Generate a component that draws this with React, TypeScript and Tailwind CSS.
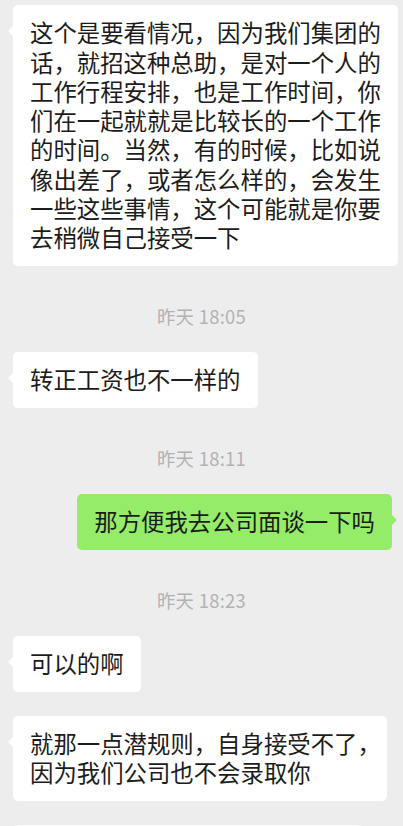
import React from "react";

const FONT = '"Noto Sans CJK SC", "Noto Sans", sans-serif';

function LeftTail() {
  return (
    <svg
      className="absolute left-[-5px] top-[20px]"
      width="6"
      height="12"
      viewBox="0 0 6 12"
    >
      <path d="M6 0 L0.8 5.2 Q0 6 0.8 6.8 L6 12 Z" fill="#ffffff" />
    </svg>
  );
}

function RightTail() {
  return (
    <svg
      className="absolute right-[-5px] top-[20px]"
      width="6"
      height="12"
      viewBox="0 0 6 12"
    >
      <path d="M0 0 L5.2 5.2 Q6 6 5.2 6.8 L0 12 Z" fill="#95ec69" />
    </svg>
  );
}

function Left({ children }: { children: React.ReactNode }) {
  return (
    <div className="flex justify-start pl-[13px]">
      <div className="relative w-fit rounded-[5px] bg-white px-[17px] py-[13.3px] text-[23.4px] leading-[29.3px] text-[#1c1c1c]">
        <LeftTail />
        <p className="whitespace-nowrap">{children}</p>
      </div>
    </div>
  );
}

function Right({ children }: { children: React.ReactNode }) {
  return (
    <div className="flex justify-end pr-[11px]">
      <div className="relative w-fit rounded-[5px] bg-[#95ec69] px-[17px] py-[13.3px] text-[23.4px] leading-[29.3px] text-[#1c1c1c]">
        <RightTail />
        <p className="whitespace-nowrap">{children}</p>
      </div>
    </div>
  );
}

function Time({ text }: { text: string }) {
  return (
    <div className="mt-[14px] flex h-[24px] items-center justify-center text-[18.4px] leading-[24px] tracking-[0.3px] text-[#b2b2b2]">
      {text}
    </div>
  );
}

export default function App() {
  return (
    <div
      className="h-[826px] w-full overflow-hidden bg-[#ededed] pt-[5px]"
      style={{ fontFamily: FONT }}
    >
      <div className="flex flex-col gap-[24px]">
        <Left>
          这个是要看情况，因为我们集团的
          <br />
          话，就招这种总助，是对一个人的
          <br />
          工作行程安排，也是工作时间，你
          <br />
          们在一起就就是比较长的一个工作
          <br />
          的时间。当然，有的时候，比如说
          <br />
          像出差了，或者怎么样的，会发生
          <br />
          一些这些事情，这个可能就是你要
          <br />
          去稍微自己接受一下
        </Left>
        <Time text="昨天 18:05" />
        <Left>转正工资也不一样的</Left>
        <Time text="昨天 18:11" />
        <Right>那方便我去公司面谈一下吗</Right>
        <Time text="昨天 18:23" />
        <Left>可以的啊</Left>
        <Left>
          就那一点潜规则，自身接受不了
          <span className="tracking-[-11px]">，</span>
          <br />
          因为我们公司也不会录取你
        </Left>
        <div className="flex justify-start pl-[13px]">
          <div className="h-[60px] w-[350px] rounded-[5px] bg-white" />
        </div>
      </div>
    </div>
  );
}
